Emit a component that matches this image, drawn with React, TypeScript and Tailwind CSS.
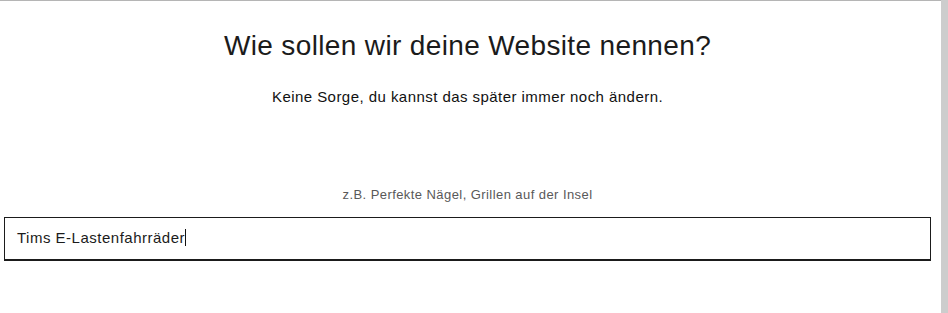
const font = { fontFamily: "'Liberation Sans', Arial, sans-serif" }

export default function App() {
  return (
    <div className="flex h-[313px] w-[948px] bg-white text-[#111]" style={font}>
      <div className="flex w-[941px] flex-col border-t border-[#b5b5b5]">
        <div className="flex flex-col items-center pr-[10px] pl-[4px]">
          <h1 className="mt-[27px] text-[28px] leading-[36px] font-normal tracking-[0.36px] text-[#1b1b1b]">
            Wie sollen wir deine Website nennen?
          </h1>
          <p className="mt-[23px] text-[15px] leading-[20px] tracking-[0.45px] text-[#111]">
            Keine Sorge, du kannst das später immer noch ändern.
          </p>
          <label className="mt-[79px] text-[13px] leading-[18px] tracking-[0.43px] text-[#595959]">
            z.B. Perfekte Nägel, Grillen auf der Insel
          </label>
          <div className="mt-[13px] flex h-[44px] w-full items-center border border-b-2 border-[#1b1b1b] px-[12px] pb-[2px]">
            <span className="text-[15px] leading-[20px] tracking-[0.5px] text-[#1b1b1b]">Tims E-Lastenfahrräder</span>
            <span className="h-[17px] w-px bg-[#111]" />
          </div>
        </div>
      </div>
      <div className="w-[7px] bg-[#cdcdcd]" />
    </div>
  )
}
